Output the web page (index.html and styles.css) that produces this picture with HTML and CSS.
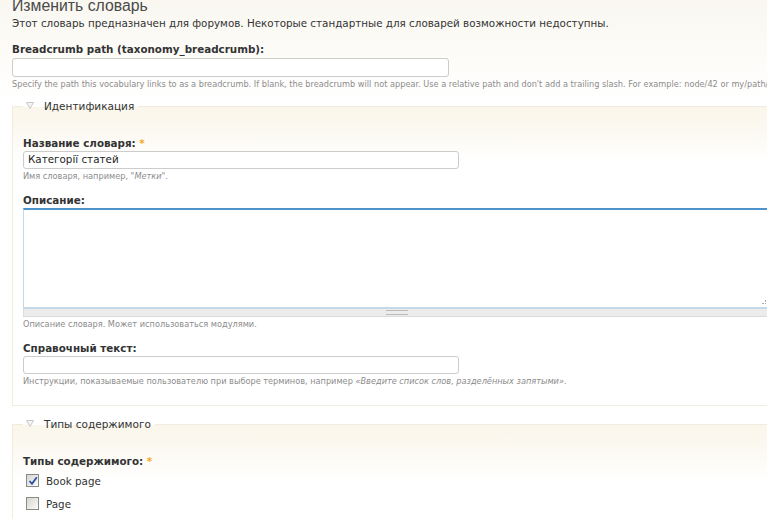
FILE: index.html
```html
<!DOCTYPE html>
<html lang="ru">
<head>
<meta charset="utf-8">
<title>Изменить словарь</title>
<link rel="stylesheet" href="styles.css">
</head>
<body>
<div class="page">
  <h1 class="title">Изменить словарь</h1>
  <p class="intro">Этот словарь предназначен для форумов. Некоторые стандартные для словарей возможности недоступны.</p>

  <div class="item top-item">
    <label class="lbl">Breadcrumb path (taxonomy_breadcrumb):</label>
    <div class="input wide"></div>
    <div class="desc nowrap">Specify the path this vocabulary links to as a breadcrumb. If blank, the breadcrumb will not appear. Use a relative path and don't add a trailing slash. For example: node/42 or my/path/alias.</div>
  </div>

  <fieldset class="fs">
    <legend class="legend"><span class="tri"><svg width="8" height="7" viewBox="0 0 8 7"><path d="M0.5 0.5 H7.5 L4 6.5 Z" fill="#f4f4f4" stroke="#c8c8c8" stroke-width="1"/></svg></span>Идентификация</legend>
    <div class="item first">
      <label class="lbl">Название словаря: <span class="req">*</span></label>
      <div class="input short">Категорії статей</div>
      <div class="desc">Имя словаря, например, <em>"Метки"</em>.</div>
    </div>
    <div class="item">
      <label class="lbl">Описание:</label>
      <div class="textarea"><span class="corner"></span></div>
      <div class="grip"><span class="grip-lines"></span></div>
      <div class="desc">Описание словаря. Может использоваться модулями.</div>
    </div>
    <div class="item last">
      <label class="lbl">Справочный текст:</label>
      <div class="input short"></div>
      <div class="desc">Инструкции, показываемые пользователю при выборе терминов, например <em>«Введите список слов, разделённых запятыми»</em>.</div>
    </div>
  </fieldset>

  <fieldset class="fs fs2">
    <legend class="legend"><span class="tri"><svg width="8" height="7" viewBox="0 0 8 7"><path d="M0.5 0.5 H7.5 L4 6.5 Z" fill="#f4f4f4" stroke="#c8c8c8" stroke-width="1"/></svg></span>Типы содержимого</legend>
    <div class="item first">
      <label class="lbl">Типы содержимого: <span class="req">*</span></label>
      <div class="checks">
        <div class="check"><span class="box checked"><svg width="10" height="10" viewBox="0 0 10 10"><path d="M1.5 5 L4 7.8 L8.8 1.2" fill="none" stroke="#2a4fa8" stroke-width="1.8"/></svg></span>Book page</div>
        <div class="check"><span class="box"></span>Page</div>
        <div class="check"><span class="box"></span>Story</div>
      </div>
    </div>
  </fieldset>
</div>
</body>
</html>
```

FILE: styles.css
```css
html, body {
  margin: 0;
  padding: 0;
}
body {
  background: linear-gradient(to bottom, #f9f7f0 0px, #fdfcf9 60px, #ffffff 100px);
  font-family: "DejaVu Sans", Verdana, sans-serif;
  font-size: 10.35px;
  color: #333;
  overflow: hidden;
  height: 519px;
}
.page {
  padding-left: 12px;
  width: 900px;
}
.title {
  margin: -4px 0 0 0;
  font-family: "Liberation Sans", Arial, sans-serif;
  font-weight: normal;
  font-size: 15.8px;
  line-height: 20px;
  color: #4a4a4a;
}
.intro {
  margin: 0;
  line-height: 14px;
  color: #333;
}
.item {
  margin-top: 11px;
}
.top-item {
  margin-top: 12px;
}
.item.first {
  margin-top: 15px;
}
.lbl {
  display: block;
  font-weight: bold;
  line-height: 14px;
  color: #333;
  margin-bottom: 1px;
}
.top-item .lbl {
  margin-bottom: 2px;
}
.req {
  color: #f6a828;
}
.input {
  box-sizing: border-box;
  width: 437px;
  height: 19px;
  border: 1px solid #ccc;
  border-radius: 3px;
  background: #fff;
  padding: 2px 4px;
  line-height: 13px;
  color: #222;
}
.input.short {
  width: 436px;
  height: 18px;
  padding-top: 1px;
}
.desc {
  margin-top: 2px;
  font-size: 8.2px;
  line-height: 11px;
  color: #8c8c8c;
}
.nowrap {
  white-space: nowrap;
}
.fs {
  margin: 9px 0 0 0;
  padding: 8px 10px 12px 10px;
  border: 1px solid #f1ece0;
  border-right: none;
  background: linear-gradient(to bottom, #faf6ea 0px, #fcf9f2 25px, #ffffff 55px);
  min-width: 0;
}
.fs2 {
  margin-top: 11px;
  padding-bottom: 40px;
}
.legend {
  padding: 0 4px 0 3px;
  margin-left: 0;
  font-size: 10.5px;
  line-height: 14px;
  color: #333;
}
.tri {
  display: inline-block;
  width: 8px;
  margin-right: 10px;
  vertical-align: 1px;
}
.tri svg {
  display: block;
}
.textarea {
  position: relative;
  box-sizing: border-box;
  width: 747px;
  height: 100px;
  border: 1px solid #c3d9ea;
  border-top: 2px solid #4f93cc;
  background: #fff;
}
.corner {
  position: absolute;
  right: 3px;
  bottom: 3px;
  width: 3px;
  height: 3px;
  border-right: 1px dotted #aaa;
  border-bottom: 1px dotted #aaa;
}
.grip {
  box-sizing: border-box;
  width: 747px;
  height: 9px;
  background: #ececec;
  border: 1px solid #dcdcdc;
  border-top: 1px solid #c3d9ea;
  display: flex;
  justify-content: center;
  align-items: center;
}
.grip-lines {
  display: block;
  width: 22px;
  height: 3px;
  border-top: 1px solid #bbb;
  border-bottom: 1px solid #bbb;
}
.last {
  margin-bottom: 6px;
}
.checks {
  margin-top: 0;
}
.check {
  display: flex;
  align-items: center;
  height: 23px;
  color: #333;
}
.box {
  box-sizing: border-box;
  width: 13px;
  height: 13px;
  border: 1px solid #8a8a8a;
  background: linear-gradient(135deg, #d6d6d0 0%, #f0f0ec 70%, #fff 100%);
  margin: 0 7px 0 3px;
  display: flex;
  align-items: center;
  justify-content: center;
}
.box svg {
  display: block;
}
em {
  font-style: italic;
}
```
